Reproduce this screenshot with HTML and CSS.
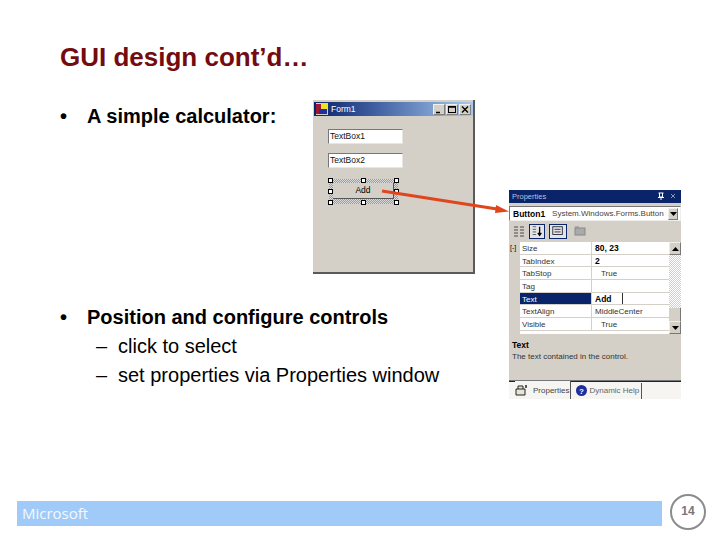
FILE: index.html
```html
<!DOCTYPE html>
<html lang="en">
<head>
<meta charset="utf-8">
<title>GUI design cont'd</title>
<link rel="stylesheet" href="styles.css">
</head>
<body>
<main class="slide">
  <h1 class="title">GUI design cont’d…</h1>
  <section class="point first"><span class="bullet">•</span><span>A simple calculator:</span></section>
  <section class="point second"><span class="bullet">•</span><span>Position and configure controls</span></section>
  <div class="sub"><span class="dash">–</span><span>click to select</span></div>
  <div class="sub"><span class="dash">–</span><span>set properties via Properties window</span></div>

  <div class="form-win">
    <div class="form-title">
      <svg class="form-icon" width="12" height="12" viewBox="0 0 12 12"><rect width="12" height="12" fill="#d4d0c8"/><rect x="0" y="1" width="6" height="10" fill="#a01830"/><rect x="5" y="0" width="7" height="6" fill="#f0e020"/><rect x="3" y="6" width="8" height="5" fill="#2030a0"/></svg>
      <span class="form-name">Form1</span>
      <span class="caps">
        <span class="cap"><svg width="10" height="9" viewBox="0 0 10 9"><path d="M2 7.500h4" stroke="#000" stroke-width="1.500"/></svg></span>
        <span class="cap"><svg width="10" height="9" viewBox="0 0 10 9"><rect x="1.500" y="1.500" width="7" height="6" fill="none" stroke="#000"/><path d="M1.500 2h7" stroke="#000" stroke-width="1.500"/></svg></span>
        <span class="cap"><svg width="10" height="9" viewBox="0 0 10 9"><path d="M2 1.500l6 6M8 1.500l-6 6" stroke="#000" stroke-width="1.400"/></svg></span>
      </span>
    </div>
    <div class="form-body">
      <div class="textbox">TextBox1</div>
      <div class="textbox">TextBox2</div>
      <div class="selected">
        <div class="add-btn">Add</div>
        <i class="h h1"></i><i class="h h2"></i><i class="h h3"></i><i class="h h4"></i><i class="h h5"></i><i class="h h6"></i><i class="h h7"></i><i class="h h8"></i>
      </div>
    </div>
  </div>

  <div class="prop-win">
    <div class="prop-title"><span>Properties</span><span class="prop-pin"><svg width="20" height="9" viewBox="0 0 20 9"><path d="M1.500 1h5M2.500 1v4h3V1M1 5.500h6M4 5.500V8" stroke="#fff" fill="none"/><path d="M14 2l4 4M18 2l-4 4" stroke="#8a94b8"/></svg></span></div>
    <div class="combo"><b>Button1</b><span class="combo-type">System.Windows.Forms.Button</span><span class="combo-drop"><svg width="7" height="4" viewBox="0 0 7 4"><path d="M0 0h7L3.500 4z" fill="#000"/></svg></span></div>
    <div class="tools">
      <svg class="tool" width="13" height="15" viewBox="0 0 13 15"><path d="M1 3h4M1 6h4M1 9h4M1 12h4M7 3h4M7 6h4M7 9h4M7 12h4" stroke="#777" stroke-width="1.500"/></svg>
      <svg class="tool on" width="16" height="15" viewBox="0 0 16 15"><path d="M3 2h4M3 5h4M3 8h4M3 11h4" stroke="#555"/><path d="M11 2v10M9 9l2 3 2-3" stroke="#000" stroke-width="1.500" fill="none"/></svg>
      <svg class="tool on" width="18" height="15" viewBox="0 0 18 15"><rect x="3" y="2" width="11" height="9" fill="none" stroke="#223"/><path d="M5 5h7M5 8h7" stroke="#223"/></svg>
      <svg class="tool" width="13" height="15" viewBox="0 0 13 15"><rect x="1" y="4" width="10" height="7" fill="#aaa" stroke="#888"/><path d="M1 3h4" stroke="#888"/></svg>
    </div>
    <div class="grid-wrap">
      <div class="gutter"><span>[-]</span></div>
      <div class="grid">
        <div class="row"><span class="k">Size</span><span class="v strong">80, 23</span></div>
        <div class="row"><span class="k">TabIndex</span><span class="v strong">2</span></div>
        <div class="row"><span class="k">TabStop</span><span class="v in">True</span></div>
        <div class="row"><span class="k">Tag</span><span class="v"></span></div>
        <div class="row sel"><span class="k">Text</span><span class="v strong">Add <span class="caret"></span></span></div>
        <div class="row"><span class="k">TextAlign</span><span class="v">MiddleCenter</span></div>
        <div class="row"><span class="k">Visible</span><span class="v in">True</span></div>
      </div>
      <div class="scroll">
        <span class="sb-btn"><svg width="7" height="4" viewBox="0 0 7 4"><path d="M3.500 0L7 4H0z" fill="#000"/></svg></span>
        <span class="sb-track"></span>
        <span class="sb-thumb"></span>
        <span class="sb-btn"><svg width="7" height="4" viewBox="0 0 7 4"><path d="M0 0h7L3.500 4z" fill="#000"/></svg></span>
      </div>
    </div>
    <div class="desc"><b>Text</b><span>The text contained in the control.</span></div>
    <div class="tabs">
      <span class="tab active"><svg width="13" height="12" viewBox="0 0 13 12"><path d="M1 5h9v6H1zM3 5V2h5v3" fill="#e8e4d8" stroke="#222"/><path d="M11 1v3" stroke="#222" stroke-width="1.500"/></svg>Properties</span>
      <span class="tab"><svg width="11" height="11" viewBox="0 0 11 11"><circle cx="5.500" cy="5.500" r="5.500" fill="#1c2f9c"/><text x="5.500" y="8.500" text-anchor="middle" class="q">?</text></svg>Dynamic Help</span>
    </div>
  </div>

  <svg class="arrow" width="720" height="540" viewBox="0 0 720 540"><path d="M382 191L497 209" stroke="#e0451c" stroke-width="3"/><path d="M509 211.500L496 205L495 213z" fill="#e0451c"/></svg>

  <footer class="foot">
    <div class="bar">Microsoft</div>
    <div class="num">14</div>
  </footer>
</main>
</body>
</html>
```
FILE: styles.css
```css
* { box-sizing: border-box; }
html, body { margin: 0; padding: 0; background: #fff; }
.slide {
  position: relative;
  width: 720px;
  height: 540px;
  overflow: hidden;
  padding: 41px 0 0 60px;
  font-family: "Liberation Sans", Arial, sans-serif;
  color: #000;
}
.title {
  margin: 0;
  font-size: 26px;
  line-height: 32px;
  font-weight: 700;
  color: #730b0f;
}
.point {
  display: flex;
  font-size: 20px;
  line-height: 29px;
  font-weight: 700;
}
.point.first { margin-top: 29px; }
.point.second { margin-top: 172px; }
.bullet { width: 27px; }
.sub {
  display: flex;
  margin-left: 36px;
  font-size: 20px;
  line-height: 29px;
}
.dash { width: 22px; }

.form-win {
  position: absolute;
  left: 313px;
  top: 100px;
  width: 162px;
  height: 174px;
  background: #d4d0c8;
  border-right: 2px solid #5a5a5a;
  border-bottom: 2px solid #5a5a5a;
  display: flex;
  flex-direction: column;
  padding: 2px 0 0 1px;
}
.form-title {
  height: 14px;
  display: flex;
  align-items: center;
  gap: 3px;
  padding: 0 2px 0 2px;
  background: linear-gradient(90deg, #0a246a 0%, #3a5a9c 35%, #a6caf0 100%);
  color: #fff;
  font: 8.500px "Liberation Sans", sans-serif;
}
.form-name { flex: 1; }
.caps { display: flex; }
.cap {
  width: 12px;
  height: 11px;
  margin-left: 1px;
  background: #d4d0c8;
  border: 1px solid #808080;
  border-top-color: #f0f0f0;
  border-left-color: #f0f0f0;
  display: flex;
}
.form-body { padding: 13px 0 0 14px; }
.textbox {
  width: 75px;
  height: 15px;
  margin-bottom: 9px;
  padding-left: 1px;
  background: #fff;
  border: 1px solid #e8e6e0;
  border-left-color: #777;
  border-top-color: #777;
  font-size: 8.500px;
  line-height: 12px;
  color: #111;
}
.selected {
  position: relative;
  width: 69px;
  height: 25px;
  margin: 11px 0 0 1px;
  padding: 4px;
  background: repeating-conic-gradient(#9a9a9a 0 25%, #dcdcdc 0 50%) 0 0 / 2px 2px;
}
.add-btn {
  height: 16px;
  background: #d4d0c8;
  border-right: 1px solid #555;
  border-bottom: 1px solid #555;
  font-size: 8.500px;
  line-height: 15px;
  text-align: center;
}
.h {
  position: absolute;
  width: 5px;
  height: 5px;
  background: #fff;
  border: 1px solid #000;
}
.h1 { left: -1px; top: -1px; }
.h2 { left: 32px; top: -1px; }
.h3 { left: 65px; top: -1px; }
.h4 { left: -1px; top: 10px; }
.h5 { left: 65px; top: 10px; }
.h6 { left: -1px; top: 21px; }
.h7 { left: 32px; top: 21px; }
.h8 { left: 65px; top: 21px; }

.prop-win {
  position: absolute;
  left: 509px;
  top: 190px;
  width: 172px;
  height: 209px;
  background: #d4d0c8;
  font-size: 8px;
  color: #111;
  display: flex;
  flex-direction: column;
}
.prop-title {
  height: 13px;
  display: flex;
  justify-content: space-between;
  align-items: center;
  padding: 0 4px 0 3px;
  background: #0a246a;
  color: #b8c0d8;
  font-size: 7.500px;
}
.prop-pin { display: flex; }
.combo {
  display: flex;
  align-items: center;
  height: 15px;
  margin-top: 3px;
  padding: 0 2px 0 3px;
  background: #fff;
  border: 1px solid #777;
  border-right-color: #eee;
  border-bottom-color: #eee;
  white-space: nowrap;
  overflow: hidden;
}
.combo b { font-size: 8.500px; color: #000; }
.combo-type { flex: 1; margin-left: 7px; overflow: hidden; color: #444; }
.combo-drop {
  flex: none;
  width: 10px;
  height: 12px;
  display: flex;
  align-items: center;
  justify-content: center;
  background: #d4d0c8;
  border: 1px solid #777;
  border-top-color: #eee;
  border-left-color: #eee;
}
.tools {
  height: 16px;
  margin-top: 3px;
  padding-left: 4px;
  display: flex;
  gap: 3px;
}
.tool { display: block; flex: none; }
.tool.on { background: #e4e3e6; border: 1px solid #0a246a; }
.tool.on + .tool.on { margin-left: 1px; }
.tool.on + .tool:not(.on) { margin-left: 4px; }
.grid-wrap {
  display: flex;
  height: 92px;
  margin-top: 2px;
  background: #fff;
}
.gutter {
  flex: none;
  width: 11px;
  background: #d4d0c8;
  font-size: 7px;
  line-height: 11px;
  color: #000;
  padding-left: 1px;
}
.grid { flex: 1; }
.row {
  display: flex;
  height: 12.700px;
  border-bottom: 1px solid #d4d0c8;
  line-height: 13px;
  font-size: 8px;
}
.k { flex: none; width: 72px; padding-left: 2px; border-right: 1px solid #d4d0c8; color: #333; }
.v { flex: 1; padding-left: 3px; color: #333; display: flex; }
.v.in { padding-left: 9px; }
.v.strong { font-weight: 700; color: #000; font-size: 8.500px; }
.row.sel .k { background: #0a246a; color: #fff; }
.caret {
  width: 1px;
  height: 11px;
  margin-left: 10px;
  background: #333;
}
.scroll {
  flex: none;
  width: 12px;
  display: flex;
  flex-direction: column;
}
.sb-btn {
  height: 13px;
  display: flex;
  align-items: center;
  justify-content: center;
  background: #d4d0c8;
  border: 1px solid #777;
  border-top-color: #eee;
  border-left-color: #eee;
}
.sb-track { flex: 1; background: repeating-conic-gradient(#d4d0c8 0 25%, #fff 0 50%) 0 0 / 2px 2px; }
.sb-thumb { height: 13px; background: #d4d0c8; border-right: 1px solid #777; }
.desc {
  height: 47px;
  padding: 6px 3px 0;
  display: flex;
  flex-direction: column;
  border-bottom: 1px solid #777;
  line-height: 11px;
  color: #333;
}
.desc b { color: #000; font-size: 8.500px; }
.tabs {
  flex: 1;
  display: flex;
  align-items: center;
  background: #f6f5f1;
  padding-left: 6px;
  border-top: 1px solid #222;
  color: #666;
}
.tab {
  display: flex;
  align-items: center;
  gap: 5px;
  height: 16px;
  padding: 0 1px 0 0;
  border-right: 1px solid #555;
  white-space: nowrap;
}
.tab + .tab { padding: 0 2px 0 5px; gap: 2px; }
.tab.active {
  color: #444;
  align-self: stretch;
  height: auto;
  margin-top: -1px;
  background: #f6f5f1;
}
.q { font: 700 8px "Liberation Sans", sans-serif; fill: #fff; }

.arrow { position: absolute; left: 0; top: 0; pointer-events: none; }

.foot {
  position: absolute;
  left: 17px;
  top: 494px;
  display: flex;
  align-items: flex-start;
  gap: 8px;
}
.bar {
  width: 645px;
  height: 25px;
  margin-top: 7px;
  padding-left: 5px;
  background: #a0cbf8;
  color: #f4f8ff;
  font: 15px/25px "Open Sans", "DejaVu Sans", sans-serif;
}
.num {
  width: 36px;
  height: 36px;
  border: 2.500px solid #8c8c8c;
  border-radius: 50%;
  color: #777;
  font-size: 12px;
  font-weight: 700;
  line-height: 31px;
  text-align: center;
}
```
